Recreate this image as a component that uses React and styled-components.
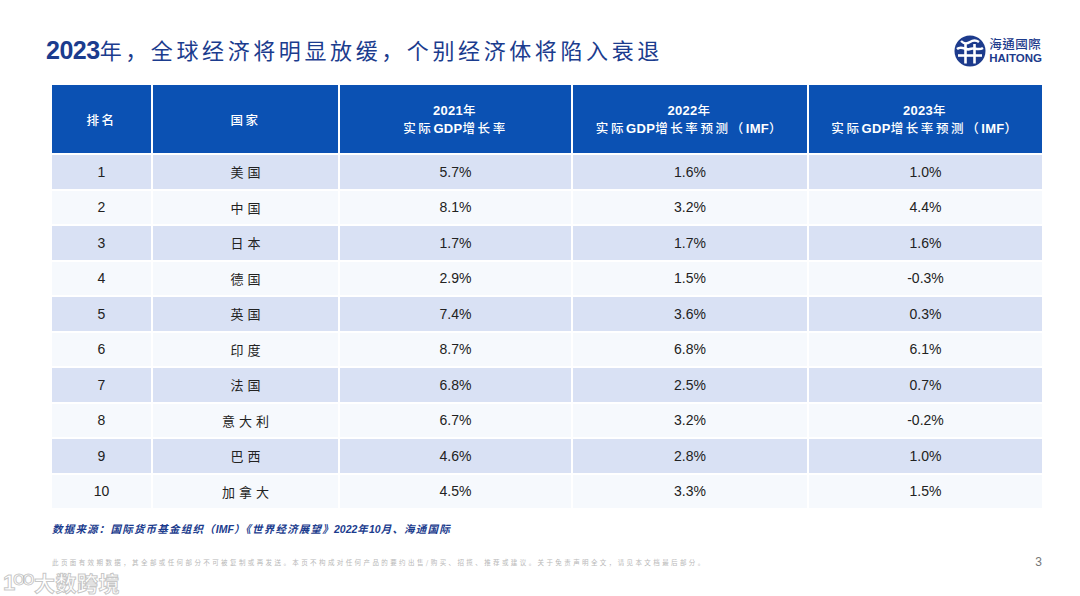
import styled, { createGlobalStyle } from "styled-components";

const GlobalStyle = createGlobalStyle`
  html, body {
    margin: 0;
    padding: 0;
    background: #fff;
  }
  body {
    font-family: "Liberation Sans", "Noto Sans CJK SC", sans-serif;
  }
`;

const Page = styled.div`
  width: 1080px;
  height: 596px;
  position: relative;
  overflow: hidden;
  background: #fff;
`;

const Header = styled.div`
  display: flex;
  justify-content: space-between;
  align-items: center;
  padding: 32px 38px 0 46px;
  height: 38px;
`;

const Title = styled.h1`
  margin: 0;
  margin-top: -4px;
  font-family: "Noto Sans CJK SC", serif;
  font-weight: 400;
  font-size: 22px;
  letter-spacing: 3.6px;
  color: #1b3c8e;

  b {
    font-family: "Liberation Sans", sans-serif;
    font-weight: 700;
    font-size: 25px;
    letter-spacing: -0.5px;
  }
`;

const Logo = styled.div`
  display: flex;
  align-items: center;
  gap: 3px;
  color: #1d3b8c;
`;

const LogoText = styled.div`
  display: flex;
  flex-direction: column;
  line-height: 1;

  span:first-child {
    font-family: "Noto Sans CJK TC", sans-serif;
    font-size: 12.5px;
    font-weight: 500;
    letter-spacing: 0.5px;
  }
  span:last-child {
    font-family: "Liberation Sans", sans-serif;
    font-weight: 700;
    font-size: 11.5px;
    margin-top: 2px;
  }
`;

const Table = styled.div`
  margin: 15px 0 0 52px;
  width: 990px;
  display: grid;
  grid-template-columns: 99px 185px 231px 234px 1fr;
  grid-auto-rows: 33.5px;
  grid-template-rows: 68px;
  gap: 2px;
  background: #fff;
`;

const HeadCell = styled.div`
  background: #0b51b3;
  color: #fff;
  display: flex;
  flex-direction: column;
  align-items: center;
  justify-content: center;
  font-family: "Noto Sans CJK SC", sans-serif;
  font-size: 12.5px;
  font-weight: 500;
  line-height: 17px;
  letter-spacing: 2.6px;
  text-align: center;

  b {
    font-family: "Liberation Sans", sans-serif;
    font-weight: 700;
    font-size: 13px;
    letter-spacing: 0.3px;
  }
`;

const Cell = styled.div`
  background: ${(p) => (p.$odd ? "#d9e1f4" : "#f6f9fd")};
  color: #222;
  display: flex;
  align-items: center;
  justify-content: center;
  font-family: ${(p) =>
    p.$cjk ? '"Noto Sans CJK SC", serif' : '"Liberation Sans", sans-serif'};
  font-size: ${(p) => (p.$cjk ? "13px" : "14px")};
  letter-spacing: ${(p) => (p.$cjk ? "4px" : "0")};
  padding-left: ${(p) => (p.$cjk ? "4px" : "0")};
`;

const Source = styled.div`
  margin: 13px 0 0 52px;
  font-family: "Noto Sans CJK SC", sans-serif;
  font-style: italic;
  font-weight: 700;
  font-size: 10.5px;
  letter-spacing: 1.2px;
  color: #1b3c8e;

  b {
    font-family: "Liberation Sans", sans-serif;
    letter-spacing: 0;
  }
`;

const Footer = styled.div`
  display: flex;
  justify-content: space-between;
  align-items: center;
  margin: 19px 38px 0 52px;
`;

const Disclaimer = styled.div`
  font-family: "Noto Sans CJK SC", sans-serif;
  font-size: 6.5px;
  line-height: 8px;
  color: #b8b8b8;
  letter-spacing: 2.4px;
`;

const PageNum = styled.div`
  font-family: "Liberation Sans", sans-serif;
  font-size: 12px;
  color: #777;
`;

const Watermark = styled.div`
  position: absolute;
  left: 3px;
  bottom: 3px;
  display: flex;
  align-items: center;
  gap: 2px;
  font-family: "Noto Sans CJK SC", sans-serif;
  font-size: 21px;
  font-weight: 700;
  line-height: 21px;
  color: rgba(255, 255, 255, 0.85);
  -webkit-text-stroke: 1px rgba(150, 150, 150, 0.55);
  letter-spacing: 0.5px;
`;

const WaterMark10 = styled.span`
  font-family: "Liberation Sans", sans-serif;
  font-size: 22px;
  letter-spacing: -2px;
`;

function HaitongMark() {
  return (
    <svg width="32" height="32" viewBox="0 0 32 32">
      <circle cx="16" cy="16" r="15.5" fill="#1d3b8c" />
      <path
        d="M3 14 C8 10 12 16 16 14 C20 12 24 16 29 13"
        stroke="#fff"
        strokeWidth="2.6"
        fill="none"
      />
      <path d="M4 20.5 H28" stroke="#fff" strokeWidth="2.6" fill="none" />
      <path
        d="M11.5 9 V28.5 M20.5 9 V28.5"
        stroke="#fff"
        strokeWidth="2.6"
        fill="none"
      />
      <path
        d="M7 6 C10 9 13 9 16 7 C19 5 22 5 25 7"
        stroke="#fff"
        strokeWidth="2.4"
        fill="none"
      />
    </svg>
  );
}

const rows = [
  ["1", "美国", "5.7%", "1.6%", "1.0%"],
  ["2", "中国", "8.1%", "3.2%", "4.4%"],
  ["3", "日本", "1.7%", "1.7%", "1.6%"],
  ["4", "德国", "2.9%", "1.5%", "-0.3%"],
  ["5", "英国", "7.4%", "3.6%", "0.3%"],
  ["6", "印度", "8.7%", "6.8%", "6.1%"],
  ["7", "法国", "6.8%", "2.5%", "0.7%"],
  ["8", "意大利", "6.7%", "3.2%", "-0.2%"],
  ["9", "巴西", "4.6%", "2.8%", "1.0%"],
  ["10", "加拿大", "4.5%", "3.3%", "1.5%"],
];

export default function App() {
  return (
    <Page>
      <GlobalStyle />
      <Header>
        <Title>
          <b>2023</b>年，全球经济将明显放缓，个别经济体将陷入衰退
        </Title>
        <Logo>
          <HaitongMark />
          <LogoText>
            <span>海通國際</span>
            <span>HAITONG</span>
          </LogoText>
        </Logo>
      </Header>

      <Table>
        <HeadCell>排名</HeadCell>
        <HeadCell>国家</HeadCell>
        <HeadCell>
          <div><b>2021</b>年</div>
          <div>实际<b>GDP</b>增长率</div>
        </HeadCell>
        <HeadCell>
          <div><b>2022</b>年</div>
          <div>实际<b>GDP</b>增长率预测（<b>IMF</b>）</div>
        </HeadCell>
        <HeadCell>
          <div><b>2023</b>年</div>
          <div>实际<b>GDP</b>增长率预测（<b>IMF</b>）</div>
        </HeadCell>
        {rows.map((r, i) =>
          r.map((v, j) => (
            <Cell key={`${i}-${j}`} $odd={i % 2 === 0} $cjk={j === 1}>
              {v}
            </Cell>
          ))
        )}
      </Table>

      <Source>
        数据来源：国际货币基金组织（<b>IMF</b>）《世界经济展望》<b>2022</b>年<b>10</b>月、海通国际
      </Source>

      <Footer>
        <Disclaimer>
          此页面有效期数据，其全部或任何部分不可被复制或再发送。本页不构成对任何产品的要约出售/购买、招揽、推荐或建议。关于免责声明全文，请见本文档最后部分。
        </Disclaimer>
        <PageNum>3</PageNum>
      </Footer>

      <Watermark>
        <WaterMark10>1ᴼᴼ</WaterMark10>
        大数跨境
      </Watermark>
    </Page>
  );
}
